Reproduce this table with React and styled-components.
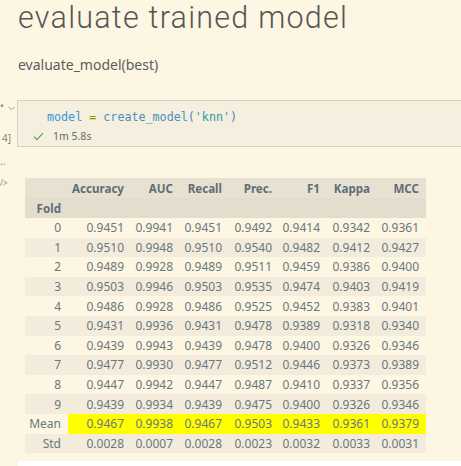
import React from "react";
import styled, { createGlobalStyle } from "styled-components";

const Global = createGlobalStyle`
  html, body { margin: 0; padding: 0; background: #fdf6e3; }
  body { font-family: "Noto Sans", "Open Sans", sans-serif; overflow: hidden; }
`;

const Page = styled.div`
  width: 461px;
  height: 466px;
  display: flex;
  flex-direction: column;
  overflow: hidden;
  background: #fdf6e3;
`;

const Title = styled.h1`
  margin: 0 0 8px;
  padding: 0 0 0 18px;
  height: 36px;
  font-family: Roboto, "Open Sans", sans-serif;
  font-size: 30.5px;
  line-height: 36px;
  font-weight: 300;
  letter-spacing: 1.25px;
  color: #555555;
  white-space: nowrap;
`;

const Para = styled.p`
  margin: 0;
  padding: 0 0 0 18px;
  height: 56px;
  font-size: 14px;
  line-height: 42px;
  color: #5c5c5c;
`;

const Row = styled.div`
  display: flex;
  align-items: flex-start;
`;

const Gutter = styled.div`
  width: 17px;
  flex: none;
  position: relative;
  color: #8a8a80;
  font-size: 10px;
`;

const GutterMark = styled.span`
  position: absolute;
  left: ${(p) => p.$x}px;
  top: ${(p) => p.$y}px;
  line-height: 1;
  white-space: nowrap;
`;

const CodeBox = styled.div`
  flex: 1;
  height: 47px;
  box-sizing: border-box;
  background: #f5efe0;
  border: 1px solid #d9d0bc;
  border-right: none;
  padding: 8px 0 0 29px;
  display: flex;
  flex-direction: column;
`;

const Code = styled.div`
  font-family: "DejaVu Sans Mono", monospace;
  font-size: 11.7px;
  line-height: 16px;
  white-space: pre;
`;

const Tok = styled.span`
  color: ${(p) => p.$c};
`;

const Status = styled.div`
  display: flex;
  align-items: center;
  gap: 9px;
  margin: 4px 0 0 -14px;
  font-size: 10.5px;
  color: #6a6a6a;
  line-height: 14px;
`;

const OutRow = styled(Row)`
  margin-top: 31px;
`;

const TableWrap = styled.div`
  padding-left: 8px;
`;

const Table = styled.table`
  border-collapse: collapse;
  font-size: 12px;
  color: #6a777d;
  table-layout: fixed;
`;

const Th = styled.th`
  width: ${(p) => p.$w}px;
  box-sizing: border-box;
  height: 20px;
  padding: 0 7px 0 0;
  text-align: right;
  font-weight: 700;
  font-size: 11.6px;
  color: #5f6e76;
  background: ${(p) => p.$bg || "#e7e1d1"};
  white-space: nowrap;
`;

const Td = styled.td`
  height: 19.6px;
  padding: 0 7px 0 0;
  text-align: right;
  white-space: nowrap;
  background: ${(p) => p.$bg};
`;

const Bottom = styled.div`
  margin: 8px 0 0 18px;
  flex: 1;
  background: #ffffff;
`;

const cols = ["Accuracy", "AUC", "Recall", "Prec.", "F1", "Kappa", "MCC"];
const widths = [43, 63, 49, 49, 50, 48, 50, 49];

const data = [
  ["0", "0.9451", "0.9941", "0.9451", "0.9492", "0.9414", "0.9342", "0.9361"],
  ["1", "0.9510", "0.9948", "0.9510", "0.9540", "0.9482", "0.9412", "0.9427"],
  ["2", "0.9489", "0.9928", "0.9489", "0.9511", "0.9459", "0.9386", "0.9400"],
  ["3", "0.9503", "0.9946", "0.9503", "0.9535", "0.9474", "0.9403", "0.9419"],
  ["4", "0.9486", "0.9928", "0.9486", "0.9525", "0.9452", "0.9383", "0.9401"],
  ["5", "0.9431", "0.9936", "0.9431", "0.9478", "0.9389", "0.9318", "0.9340"],
  ["6", "0.9439", "0.9943", "0.9439", "0.9478", "0.9400", "0.9326", "0.9346"],
  ["7", "0.9477", "0.9930", "0.9477", "0.9512", "0.9446", "0.9373", "0.9389"],
  ["8", "0.9447", "0.9942", "0.9447", "0.9487", "0.9410", "0.9337", "0.9356"],
  ["9", "0.9439", "0.9934", "0.9439", "0.9475", "0.9400", "0.9326", "0.9346"],
  ["Mean", "0.9467", "0.9938", "0.9467", "0.9503", "0.9433", "0.9361", "0.9379"],
  ["Std", "0.0028", "0.0007", "0.0028", "0.0023", "0.0032", "0.0033", "0.0031"],
];

function rowBg(i, j) {
  if (i === 10) return j === 0 ? "#fdf6e3" : "#ffff00";
  return i % 2 === 1 ? "#f3ecdc" : "#fdf6e3";
}

function Check() {
  return (
    <svg width="11" height="9" viewBox="0 0 11 9" fill="none">
      <path d="M1 4.6 L3.9 7.6 L10 1.2" stroke="#5aa05a" strokeWidth="1.1" />
    </svg>
  );
}

function Chevron() {
  return (
    <svg width="7" height="5" viewBox="0 0 7 5" fill="none">
      <path d="M0.5 0.8 L3.5 3.8 L6.5 0.8" stroke="#8a8a80" strokeWidth="0.9" />
    </svg>
  );
}

export default function App() {
  return (
    <Page>
      <Global />
      <Title>evaluate trained model</Title>
      <Para>evaluate_model(best)</Para>
      <Row>
        <Gutter>
          <GutterMark $x={0} $y={1}>•</GutterMark>
          <GutterMark $x={8} $y={2}><Chevron /></GutterMark>
          <GutterMark $x={2} $y={33}>4]</GutterMark>
        </Gutter>
        <CodeBox>
          <Code>
            <Tok $c="#3994dc">model</Tok>
            <Tok $c="#859900"> = </Tok>
            <Tok $c="#4b8fbf">create_model</Tok>
            <Tok $c="#4d7fd6">(</Tok>
            <Tok $c="#2aa198">'knn'</Tok>
            <Tok $c="#4d7fd6">)</Tok>
          </Code>
          <Status>
            <Check />
            <span>1m 5.8s</span>
          </Status>
        </CodeBox>
      </Row>
      <OutRow>
        <Gutter>
          <GutterMark $x={0} $y={-22}>..</GutterMark>
          <GutterMark $x={0} $y={1} style={{ fontSize: 8 }}>/&gt;</GutterMark>
        </Gutter>
        <TableWrap>
          <Table>
            <thead>
              <tr>
                <Th $w={widths[0]} />
                {cols.map((c, k) => (
                  <Th key={c} $w={widths[k + 1]}>{c}</Th>
                ))}
              </tr>
              <tr>
                <Th $w={widths[0]} $bg="#e3ddcd">Fold</Th>
                {cols.map((c) => (
                  <Th key={c} $bg="#e3ddcd" />
                ))}
              </tr>
            </thead>
            <tbody>
              {data.map((r, i) => (
                <tr key={r[0]}>
                  {r.map((v, j) => (
                    <Td key={j} $bg={rowBg(i, j)}>{v}</Td>
                  ))}
                </tr>
              ))}
            </tbody>
          </Table>
        </TableWrap>
      </OutRow>
      <Bottom />
    </Page>
  );
}
